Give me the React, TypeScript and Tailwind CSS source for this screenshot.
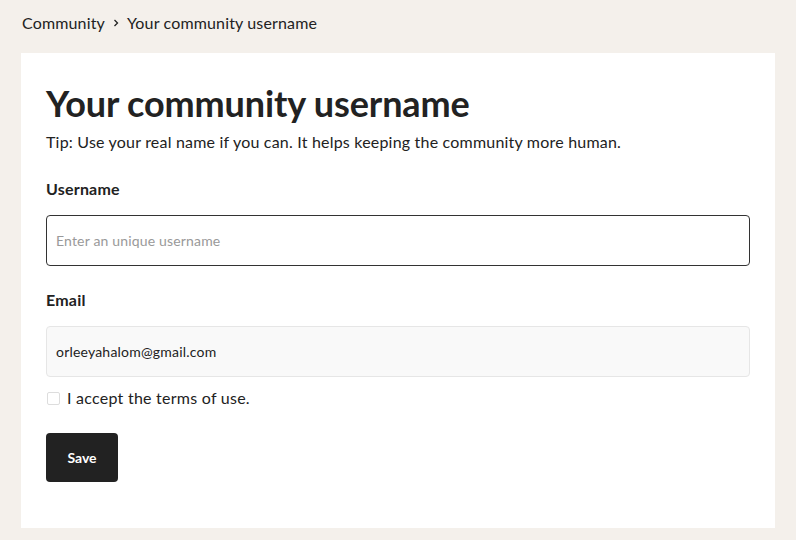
import React from "react";

export default function App() {
  return (
    <div className="min-h-[540px] w-full bg-[#f4f0eb] text-[#222222]" style={{ fontFamily: "Lato, 'Noto Sans', sans-serif" }}>
      <div className="flex items-center gap-[7px] pl-[22px] pt-[13px] pb-[20px] text-[16px] leading-[20px] tracking-[0.15px]">
        <span>Community</span>
        <svg width="8" height="10" viewBox="0 0 8 10" fill="none" stroke="#222" strokeWidth="1.3"><path d="M2.5 2 L5.5 5 L2.5 8" /></svg>
        <span>Your community username</span>
      </div>
      <div className="mx-[21px] bg-white px-[25px] pt-[30px] pb-[46px]">
        <h1 className="text-[36px] font-bold leading-[40px] tracking-[-0.12px]">Your community username</h1>
        <p className="mt-[8px] text-[16px] leading-[22px] tracking-[0.2px]">Tip: Use your real name if you can. It helps keeping the community more human.</p>
        <label className="mt-[25px] block text-[16px] font-bold leading-[22px] tracking-[0.2px]">Username</label>
        <input
          className="mt-[15px] block h-[51px] w-full rounded-[4px] border border-[#333] px-[9px] text-[14px] tracking-[0.17px] outline-none placeholder:text-[#999]"
          placeholder="Enter an unique username"
        />
        <label className="mt-[23px] block text-[16px] font-bold leading-[22px] tracking-[0.2px]">Email</label>
        <input
          className="mt-[15px] block h-[51px] w-full rounded-[4px] border border-[#e6e6e6] bg-[#f9f9f9] px-[9px] text-[14px] tracking-[0.2px] text-[#222] outline-none"
          defaultValue="orleeyahalom@gmail.com"
          readOnly
        />
        <label className="mt-[11px] flex items-center gap-[7px] text-[16px] leading-[20px] tracking-[0.25px]">
          <span className="ml-[1px] inline-block h-[13px] w-[13px] rounded-[2px] border border-[#ddd] bg-white" />
          <span>I accept the terms of use.</span>
        </label>
        <button className="mt-[25px] h-[49px] w-[72px] rounded-[4px] bg-[#222222] text-[14px] font-bold text-white">Save</button>
      </div>
    </div>
  );
}
